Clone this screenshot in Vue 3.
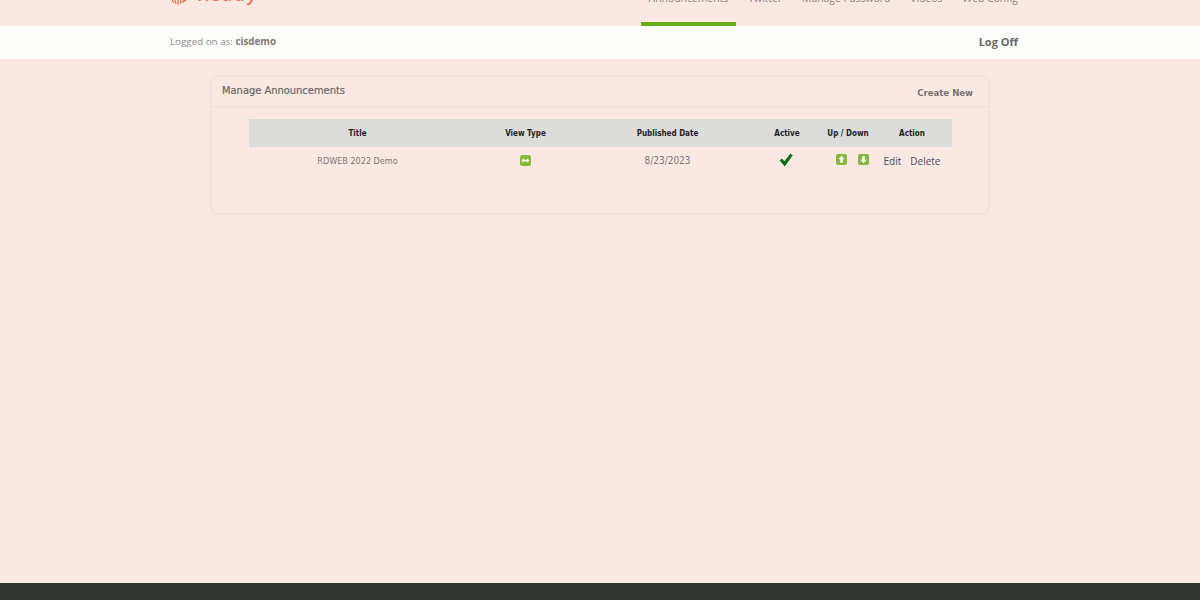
<script setup>
const columns = ['Title', 'View Type', 'Published Date', 'Active', 'Up / Down', 'Action']
const navItems = [
  { label: 'Announcements', active: true },
  { label: 'Twitter', active: false },
  { label: 'Manage Password', active: false },
  { label: 'Videos', active: false },
  { label: 'Web Config', active: false },
]
</script>

<template>
  <div class="page">
    <header class="top">
      <div class="shell top-inner">
        <div class="logo">
          <svg class="logo-mark" width="18" height="5" viewBox="0 0 18 5">
            <path d="M2 0l2 3M5 0l1 4M8 0v5M11 0l-1 4M14 0l-2 3M16 0l-3 2" stroke="#e9744c" stroke-width="1.2" fill="none" />
          </svg>
          <span class="logo-text">Ready</span>
        </div>
        <nav class="nav">
          <a v-for="item in navItems" :key="item.label" class="nav-item" :class="{ active: item.active }">{{ item.label }}</a>
        </nav>
      </div>
    </header>

    <div class="userbar">
      <div class="shell userbar-inner">
        <span class="logged">Logged on as: <b>cisdemo</b></span>
        <a class="logoff">Log Off</a>
      </div>
    </div>

    <main class="main">
      <section class="panel">
        <div class="panel-head">
          <h2>Manage Announcements</h2>
          <a class="create">Create New</a>
        </div>
        <div class="panel-body">
          <div class="table">
            <div class="row head">
              <div v-for="col in columns" :key="col" class="cell">{{ col }}</div>
            </div>
            <div class="row data">
              <div class="cell title-cell">RDWEB 2022 Demo</div>
              <div class="cell">
                <svg class="icon" width="11" height="11" viewBox="0 0 11 11">
                  <rect width="11" height="11" rx="2.5" fill="#86b83c" />
                  <path d="M1.5 5.5L4 3.3v1.4h3V3.3l2.5 2.2L7 7.7V6.3H4v1.4z" fill="#fff" />
                </svg>
              </div>
              <div class="cell">8/23/2023</div>
              <div class="cell check">
                <svg width="14" height="14" viewBox="0 0 14 14">
                  <path d="M0.6 7.6L3 5.4l2.4 2.8L11.4 0.6 13.8 2.2 5.8 13.6z" fill="#0f6f17" />
                </svg>
              </div>
              <div class="cell arrows">
                <svg class="icon" width="11" height="11" viewBox="0 0 11 11">
                  <rect width="11" height="11" rx="2" fill="#86b83c" />
                  <path d="M5.5 1.8L8.6 5.2H6.8v3.6H4.2V5.2H2.4z" fill="#fff" />
                </svg>
                <svg class="icon" width="11" height="11" viewBox="0 0 11 11">
                  <rect width="11" height="11" rx="2" fill="#86b83c" />
                  <path d="M5.5 9.2L8.6 5.8H6.8V2.2H4.2v3.6H2.4z" fill="#fff" />
                </svg>
              </div>
              <div class="cell actions"><a>Edit</a><a>Delete</a></div>
            </div>
          </div>
        </div>
      </section>
    </main>

    <footer class="footer"></footer>
  </div>
</template>

<style>
html, body { margin: 0; padding: 0; }
</style>

<style scoped>
.page {
  height: 600px;
  display: flex;
  flex-direction: column;
  background: #fae9e2;
  font-family: "Open Sans", "Noto Sans", sans-serif;
  overflow: hidden;
}
.shell {
  margin: 0 auto;
  padding: 0 182px 0 170px;
  width: 848px;
}
.top { height: 26px; overflow: hidden; flex: none; }
.top-inner {
  display: flex;
  justify-content: space-between;
  height: 26px;
}
.logo { display: flex; align-items: flex-start; gap: 9px; }
.logo-text {
  margin-top: -18px;
  font-size: 18px;
  line-height: 24px;
  color: #ea7650;
  font-weight: 600;
  letter-spacing: 1.5px;
}
.nav {
  display: flex;
  gap: 4px;
  margin: -9px -8px 0 0;
}
.nav-item {
  padding: 0 8px;
  box-sizing: border-box;
  height: 35px;
  font-size: 10.4px;
  line-height: 14px;
  color: #8a8381;
}
.nav-item.active { border-bottom: 4px solid #6aab18; }
.userbar {
  flex: none;
  height: 33px;
  background: #fdfdfc;
}
.userbar-inner {
  display: flex;
  justify-content: space-between;
  align-items: center;
  height: 31px;
  padding-bottom: 2px;
}
.logged { font-size: 9.8px; color: #8f8b89; }
.logged b { color: #7d7977; font-weight: 700; }
.logoff { font-size: 11px; font-weight: 700; color: #666; }
.main { flex: 1; padding-top: 16px; }
.panel {
  width: 776px;
  height: 136px;
  margin: 0 auto;
  border: 2px solid #f0e4dd;
  border-radius: 8px;
}
.panel-head {
  display: flex;
  justify-content: space-between;
  align-items: center;
  height: 29px;
  padding: 0 15px 0 10px;
  border-bottom: 2px solid #f0e4dd;
  font-family: "DejaVu Sans Condensed", "DejaVu Sans", sans-serif;
}
.panel-head h2 {
  margin: -2px 0 0;
  font-size: 11px;
  font-weight: 400;
  -webkit-text-stroke: 0.2px #6c6665;
  color: #6c6665;
}
.create { font-size: 9.5px; font-weight: 700; color: #767170; padding-top: 2px; }
.panel-body {
  padding: 11px 37px 0;
  font-family: "DejaVu Sans Condensed", "DejaVu Sans", sans-serif;
}
.table { width: 703px; }
.row {
  display: grid;
  grid-template-columns: 217px 119px 165px 74px 48px 80px;
  justify-items: center;
  align-items: center;
}
.head {
  height: 28px;
  background: #dcdcdb;
  font-size: 8px;
  font-weight: 700;
  color: #222;
}
.data {
  height: 27px;
  font-size: 10px;
  color: #7e7674;
}
.title-cell { font-size: 9px; }
.check { margin-right: 2px; }
.icon { display: block; }
.arrows { display: flex; gap: 11px; margin: -3px 0 0 9px; }
.actions {
  display: flex;
  gap: 9px;
  font-family: "Open Sans", sans-serif;
  font-size: 10px;
  color: #4a4a60;
  padding-top: 1px;
}
.footer {
  flex: none;
  height: 17px;
  background: #323432;
}
</style>
